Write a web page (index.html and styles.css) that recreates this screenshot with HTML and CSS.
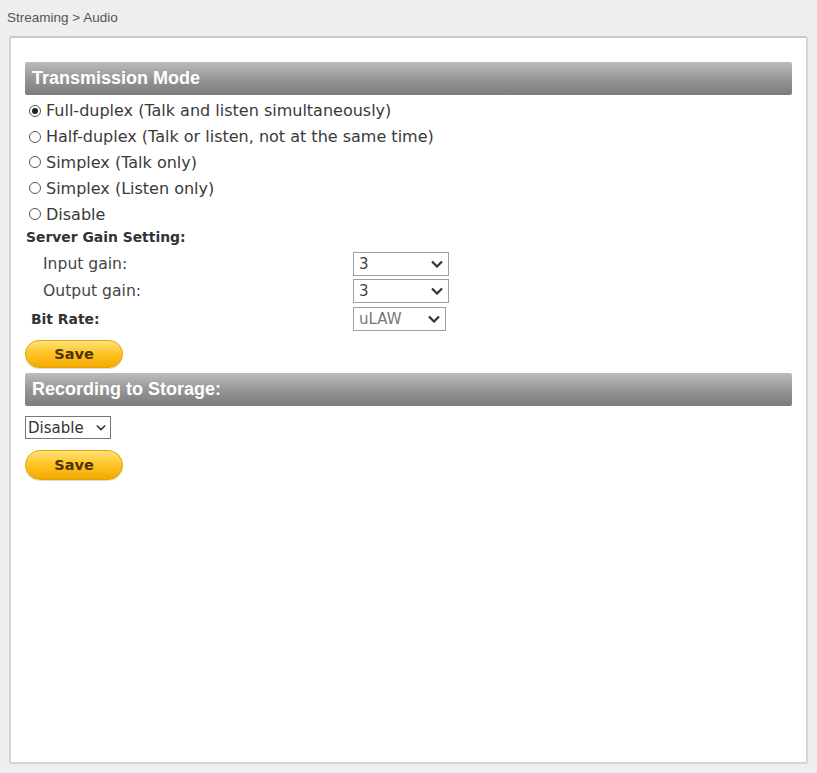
FILE: index.html
```html
<!DOCTYPE html>
<html>
<head>
<meta charset="utf-8">
<link rel="stylesheet" href="styles.css">
</head>
<body>
<div class="crumb">Streaming &gt; Audio</div>
<div class="panel">
  <div class="bar">Transmission Mode</div>
  <div class="radios">
    <label class="radio"><span class="dot on"></span>Full-duplex (Talk and listen simultaneously)</label>
    <label class="radio"><span class="dot"></span>Half-duplex (Talk or listen, not at the same time)</label>
    <label class="radio"><span class="dot"></span>Simplex (Talk only)</label>
    <label class="radio"><span class="dot"></span>Simplex (Listen only)</label>
    <label class="radio"><span class="dot"></span>Disable</label>
  </div>
  <div class="bold-label gain-title">Server Gain Setting:</div>
  <div class="row sub">
    <span class="lbl">Input gain:</span>
    <span class="sel w96"><span>3</span><svg viewBox="0 0 12 8" class="chev"><path d="M1 1.5 L6 6.5 L11 1.5" fill="none" stroke="#333" stroke-width="2.2"/></svg></span>
  </div>
  <div class="row sub">
    <span class="lbl">Output gain:</span>
    <span class="sel w96"><span>3</span><svg viewBox="0 0 12 8" class="chev"><path d="M1 1.5 L6 6.5 L11 1.5" fill="none" stroke="#333" stroke-width="2.2"/></svg></span>
  </div>
  <div class="row bit">
    <span class="lbl bold-label">Bit Rate:</span>
    <span class="sel w93 light"><span>uLAW</span><svg viewBox="0 0 12 8" class="chev"><path d="M1 1.5 L6 6.5 L11 1.5" fill="none" stroke="#333" stroke-width="2.2"/></svg></span>
  </div>
  <button class="save save1">Save</button>
  <div class="bar bar2">Recording to Storage:</div>
  <span class="sel small"><span>Disable</span><svg viewBox="0 0 12 8" class="chev"><path d="M1 1.5 L6 6.5 L11 1.5" fill="none" stroke="#333" stroke-width="1.8"/></svg></span>
  <div><button class="save save2">Save</button></div>
</div>
</body>
</html>
```
FILE: styles.css
```css
html, body {
  margin: 0;
  padding: 0;
}
body {
  background: #eeeeee;
  width: 817px;
  height: 773px;
  overflow: hidden;
  font-family: "DejaVu Sans", Verdana, sans-serif;
  color: #333;
}
.crumb {
  font-family: "Liberation Sans", Arial, sans-serif;
  font-size: 13.5px;
  color: #555;
  padding: 10px 0 0 7px;
  height: 26px;
  box-sizing: border-box;
}
.panel {
  margin-left: 9px;
  width: 799px;
  height: 728px;
  box-sizing: border-box;
  background: #fff;
  border: 2px solid #d4d4d4;
  border-top-color: #c8c8c8;
  border-radius: 3px;
  padding: 24px 14px 0 14px;
  margin-top: 10px;
}
.bar {
  height: 33px;
  background: linear-gradient(#bcbcbc, #939393 55%, #7c7c7c);
  color: #fff;
  font-family: "Liberation Sans", Arial, sans-serif;
  font-weight: bold;
  font-size: 18px;
  line-height: 33px;
  padding-left: 7px;
  border-radius: 2px;
}
.radios {
  padding-top: 3px;
}
.radio {
  display: flex;
  align-items: center;
  height: 25.8px;
  font-size: 16px;
  color: #3a3a3a;
  padding-left: 4px;
}
.dot {
  width: 10px;
  height: 10px;
  border: 1px solid #555;
  border-radius: 50%;
  margin-right: 5px;
  box-sizing: content-box;
  position: relative;
  flex: none;
}
.dot.on::after {
  content: "";
  position: absolute;
  left: 2px;
  top: 2px;
  width: 6px;
  height: 6px;
  border-radius: 50%;
  background: #222;
}
.bold-label {
  font-family: "DejaVu Sans", Verdana, sans-serif;
  font-weight: bold;
  font-size: 13.9px;
  color: #333;
}
.gain-title {
  padding-left: 1px;
  height: 20px;
  line-height: 20px;
  margin-bottom: 3px;
}
.row {
  display: flex;
  align-items: center;
  height: 27.5px;
}
.sub .lbl {
  padding-left: 18px;
  width: 310px;
  font-size: 15.6px;
  color: #444;
}
.bit .lbl {
  padding-left: 6px;
  width: 322px;
}
.sel {
  display: inline-flex;
  align-items: center;
  justify-content: space-between;
  height: 24px;
  box-sizing: border-box;
  border: 1px solid #a0a0a0;
  background: #fff;
  font-family: "DejaVu Sans", Verdana, sans-serif;
  font-size: 15px;
  color: #444;
  padding: 0 5px 0 5px;
}
.sel.light { color: #777; }
.w96 { width: 96px; }
.w93 { width: 93px; }
.chev {
  width: 12px;
  height: 8px;
}
.save {
  display: block;
  width: 98px;
  height: 28px;
  border: 1px solid #e2a400;
  border-radius: 14px;
  background: linear-gradient(#ffe27a, #ffc62a 45%, #f3a900);
  font-family: "DejaVu Sans", Verdana, sans-serif;
  font-weight: bold;
  font-size: 14.5px;
  color: #4d3400;
  padding: 0;
  box-shadow: 0 1px 1px rgba(0,0,0,0.15);
}
.save1 {
  margin-top: 8px;
}
.bar2 {
  margin-top: 5px;
}
.small {
  margin-top: 10px;
  width: 86px;
  height: 23px;
  border-color: #777;
  padding: 0 4px 0 2px;
  font-size: 15px;
  color: #333;
}
.small .chev { width: 10px; height: 7px; }
.save2 {
  margin-top: 11px;
  height: 30px;
  border-radius: 15px;
}
```
